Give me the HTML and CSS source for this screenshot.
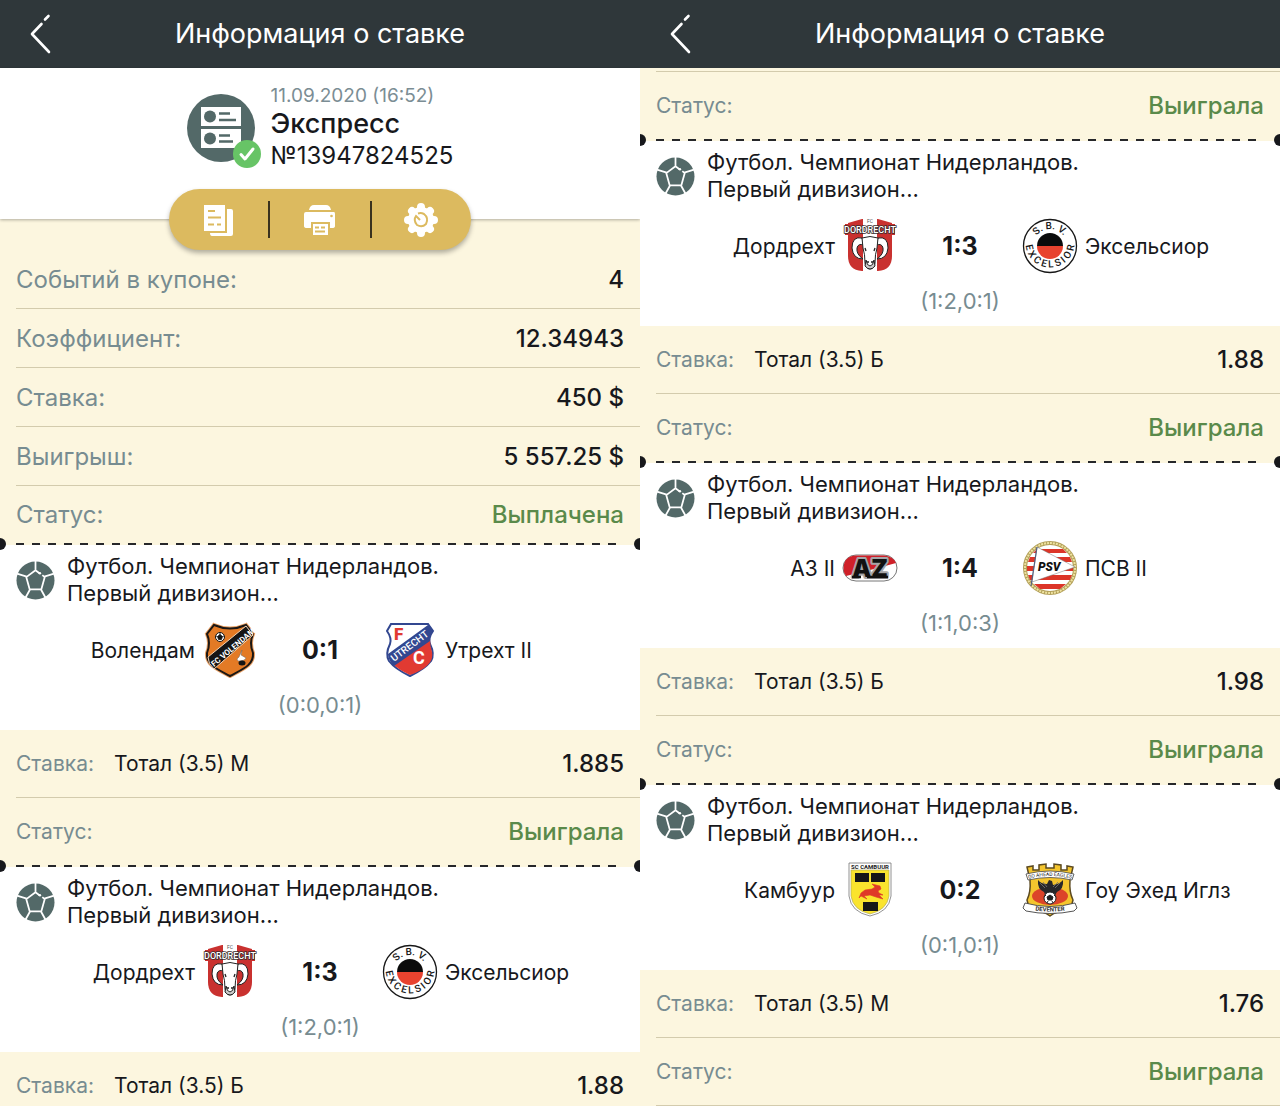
FILE: index.html
```html
<!DOCTYPE html>
<html lang="ru">
<head>
  <meta charset="UTF-8">
  <meta name="viewport" content="width=device-width, initial-scale=1.0">
  <title>Информация о ставке</title>
  <link rel="stylesheet" href="styles.css">
</head>
<body>

<!-- Shared icons and text arcs for the round logos -->
<svg class="sprite" aria-hidden="true">
  <symbol id="back" viewBox="0 0 24 42">
    <path d="M13.500 11 4 21 21 39M17 6.500 20.500 3" fill="none" stroke="#fff" stroke-width="2.600" stroke-linecap="round" stroke-linejoin="round"/>
  </symbol>

  <symbol id="ball" viewBox="0 0 40 40">
    <circle cx="20" cy="20" r="19.500" fill="#536968"/>
    <path d="M20 0V10M11 16 1 13M29 16 39 13M14.500 29 9 39M25.500 29 31 39M24 12.500 20 9.500 10.500 16.500 14 29H26L29.500 16.500 27 14.500" fill="none" stroke="#fff" stroke-width="1.800" stroke-linejoin="round"/>
    <circle cx="24.500" cy="12.500" r="1.300" fill="#fff"/>
  </symbol>

  <defs>
    <path id="arc-top" d="M11 28A17 17 0 0 1 45 28"/>
    <path id="arc-bottom" d="M3.500 25A24.500 24.500 0 0 0 52.500 25"/>
    <path id="ribbon-top" d="M7 16.500Q28 11.500 49 16.500"/>
    <path id="ribbon-bottom" d="M8 47.500Q28 51.500 48 47.500"/>
  </defs>
</svg>

<main class="screens">

  <section class="screen">
    <header class="topbar">
      <button class="back" aria-label="Назад"><svg><use href="#back"/></svg></button>
      <h1>Информация о ставке</h1>
    </header>

    <div class="ticket">
      <div class="ticket-info">
        <svg class="ticket-icon" viewBox="0 -4 76 80" aria-hidden="true">
          <circle cx="34" cy="36" r="34" fill="#536968"/>
          <path d="M14 15H54V34H14ZM14 37H54V56H14Z" fill="#fff"/>
          <circle cx="23" cy="24.500" r="6" fill="#536968"/>
          <circle cx="23" cy="46.500" r="6" fill="#536968"/>
          <path d="M32 21.500H43M32 28H49M32 43.500H43M32 49.500H46" stroke="#536968" stroke-width="2.600"/>
          <circle cx="60" cy="62" r="14" fill="#67c466"/>
          <path d="M54 62.500 58 67 66 57" fill="none" stroke="#fff" stroke-width="3" stroke-linecap="round" stroke-linejoin="round"/>
        </svg>
        <div class="ticket-text">
          <p class="date">11.09.2020 (16:52)</p>
          <p class="type">Экспресс</p>
          <p class="number">№13947824525</p>
        </div>
      </div>
      <div class="actions">
        <button aria-label="Копировать">
          <svg viewBox="0 0 34 36">
            <path d="M2 3H23V29H2Z" fill="#fff"/>
            <path d="M25 7H29Q31 7 31 9V32Q31 34 29 34H10Q8 34 8 31H25Z" fill="#fff"/>
            <path d="M6 9H13M6 15.500H19M6 22.500H12M15 22.500H19" stroke="#dcba5f" stroke-width="2"/>
          </svg>
        </button>
        <span class="split"></span>
        <button aria-label="Печать">
          <svg viewBox="0 0 34 36">
            <path d="M6 8Q7 3 11 3H23Q27 3 28 8ZM3 10H31Q32 10 32 12V24Q32 26 29 26H27V20H8V26H4Q1 26 1 24V12Q1 10 3 10Z" fill="#fff"/>
            <path d="M10 22H25V33H10Z" fill="#fff"/>
            <path d="M12 25.500H16M18 25.500H22M12 29.500H22" stroke="#dcba5f" stroke-width="2"/>
            <circle cx="28.500" cy="14" r="1.300" fill="#dcba5f"/>
          </svg>
        </button>
        <span class="split"></span>
        <button aria-label="Настройки">
          <svg viewBox="0 0 34 36">
            <circle cx="17" cy="18" r="13" fill="#fff"/>
            <path d="M17 5V31M4 18H30M8 9 26 27M26 9 8 27" stroke="#fff" stroke-width="8" stroke-linecap="round"/>
            <path d="M14 11.500Q17 10.500 20 12 25 16 22 22 18 26 13 23 9 18 12 14L16 18" fill="none" stroke="#dcba5f" stroke-width="2"/>
          </svg>
        </button>
      </div>
    </div>

    <dl class="summary">
      <div><dt>Событий в купоне:</dt><dd>4</dd></div>
      <div><dt>Коэффициент:</dt><dd>12.34943</dd></div>
      <div><dt>Ставка:</dt><dd>450 $</dd></div>
      <div><dt>Выигрыш:</dt><dd>5 557.25 $</dd></div>
      <div><dt>Статус:</dt><dd class="win">Выплачена</dd></div>
    </dl>

    <article class="event">
      <div class="tear"></div>
      <div class="match">
        <div class="league">
          <svg class="ball"><use href="#ball"/></svg>
          <h2>Футбол. Чемпионат Нидерландов.<br>Первый дивизион...</h2>
        </div>
        <div class="teams">
          <div class="team home">
            <span>Волендам</span>
            <svg viewBox="0 0 56 56">
              <path d="M12 3Q28 10 44 3L51 12Q47 21 51 31C52 43 41 47 28 54 15 47 4 43 5 31Q9 21 5 12Z" fill="#e37a25" stroke="#e9a064" stroke-width="4"/>
              <path d="M12 3Q28 10 44 3L51 12Q47 21 51 31C52 43 41 47 28 54 15 47 4 43 5 31Q9 21 5 12Z" fill="#e37a25" stroke="#1b1714" stroke-width="2"/>
              <path d="M6 35 44 4 51 13 12 47Q6 42 6 35Z" fill="#151515" stroke="#f2d3b5" stroke-width="1"/>
              <text class="crest-text" transform="translate(12 45) rotate(-40)" font-size="8" font-weight="700" fill="#fff">FC VOLENDAM</text>
              <circle cx="18" cy="15" r="4.500" fill="#fff" stroke="#111"/>
              <path d="M18 12.500 20.500 14.500 19.500 17.500H16.500L15.500 14.500ZM18 10.500V13M22 14 20.500 14.500M14 14 15.500 14.500" fill="#111" stroke="#111" stroke-width=".800"/>
              <path d="M40 28 39 33 44 36Q43 39 36 39L35 37 37 35Z" fill="#fff" stroke="#666" stroke-width=".500"/>
              <ellipse cx="40" cy="41" rx="3.500" ry="2.500" fill="#151515"/>
            </svg>
          </div>
          <strong>0:1</strong>
          <div class="team">
            <svg viewBox="0 0 56 56">
              <path d="M9 2H46L51 9Q46 16 48 22 53 32 49 39 43 47 28 54 13 47 7 39 3 32 8 22 10 16 5 9Z" fill="#fff" stroke="#324790" stroke-width="2"/>
              <path d="M11 42 48 17Q48 24 50 30 53 44 28 53 17 48 11 42Z" fill="#e13a32"/>
              <path d="M6 32 46 3 51 9Q47 15 48 19L12 44Q6 38 6 32Z" fill="#324790"/>
              <text class="crest-text" transform="translate(12 40) rotate(-37)" font-size="10" font-weight="500" fill="#fff">UTRECHT</text>
              <text class="crest-text" x="12" y="18" font-size="17" font-weight="900" fill="#e13a32">F</text>
              <text class="crest-text" x="31" y="42" font-size="18" font-weight="700" fill="#fff">C</text>
            </svg>
            <span>Утрехт II</span>
          </div>
        </div>
        <p class="halves">(0:0,0:1)</p>
      </div>
      <dl class="bet">
        <div><dt>Ставка:</dt><dd class="pick">Тотал (3.5) М</dd><dd>1.885</dd></div>
        <div><dt>Статус:</dt><dd class="win">Выиграла</dd></div>
      </dl>
    </article>

    <article class="event">
      <div class="tear"></div>
      <div class="match">
        <div class="league">
          <svg class="ball"><use href="#ball"/></svg>
          <h2>Футбол. Чемпионат Нидерландов.<br>Первый дивизион...</h2>
        </div>
        <div class="teams">
          <div class="team home">
            <span>Дордрехт</span>
            <svg viewBox="0 0 56 56">
              <path d="M6 5 20 1H36L50 5V38Q50 52 36 53H20Q6 52 6 38Z" fill="#c9312f"/>
              <path d="M21 0H35V53H21Z" fill="#fff"/>
              <path d="M3 6H53V17H3Z" fill="#c9312f"/>
              <path d="M21 6H35V17H21Z" fill="#fff"/>
              <text class="crest-text" x="25" y="5" font-size="5" fill="#555">FC</text>
              <text class="crest-text" x="28" y="15" text-anchor="middle" font-size="9" font-weight="500" fill="#fff" stroke="#3a2c2c" stroke-width="1.600" paint-order="stroke">DORDRECHT</text>
              <path d="M20 20Q10 18 10 30 11 41 21 41 14 36 15 30 16 25 22 27ZM36 20Q46 18 46 30 45 41 35 41 42 36 41 30 40 25 34 27Z" fill="#fff" stroke="#222"/>
              <path d="M20 20Q28 17 36 20L35 30Q33 36 33 45 32 51 28 51 24 51 23 45 23 36 21 30Z" fill="#fff" stroke="#222"/>
              <path d="M24 42Q25 48 28 48 31 48 32 42L33 48Q28 54 23 48Z" fill="#ccc" stroke="#222"/>
              <path d="M23 30 24 33M33 30 32 33M25 44H27M29 44H31" stroke="#222" stroke-width="1.300"/>
            </svg>
          </div>
          <strong>1:3</strong>
          <div class="team">
            <svg viewBox="0 0 56 56">
              <circle cx="28" cy="28" r="26.500" fill="#fff" stroke="#171717" stroke-width="1.300"/>
              <path d="M15 28a13 13 0 0 1 26 0Z" fill="#0b0b0b"/>
              <path d="M15 28a13 13 0 0 0 26 0Z" fill="#e8432f"/>
              <text class="crest-text" font-size="10" font-weight="500" fill="#171717" text-anchor="middle"><textPath href="#arc-top" startOffset="50%">S. B. V.</textPath></text>
              <text class="crest-text" font-size="10" font-weight="500" fill="#171717" text-anchor="middle"><textPath href="#arc-bottom" startOffset="50%">E X C E L S I O R</textPath></text>
            </svg>
            <span>Эксельсиор</span>
          </div>
        </div>
        <p class="halves">(1:2,0:1)</p>
      </div>
      <dl class="bet">
        <div><dt>Ставка:</dt><dd class="pick">Тотал (3.5) Б</dd><dd>1.88</dd></div>
      </dl>
    </article>
  </section>

  <section class="screen">
    <header class="topbar">
      <button class="back" aria-label="Назад"><svg><use href="#back"/></svg></button>
      <h1>Информация о ставке</h1>
    </header>

    <dl class="bet scrolled">
      <div><dt>Статус:</dt><dd class="win">Выиграла</dd></div>
    </dl>

    <article class="event">
      <div class="tear"></div>
      <div class="match">
        <div class="league">
          <svg class="ball"><use href="#ball"/></svg>
          <h2>Футбол. Чемпионат Нидерландов.<br>Первый дивизион...</h2>
        </div>
        <div class="teams">
          <div class="team home">
            <span>Дордрехт</span>
            <svg viewBox="0 0 56 56">
              <path d="M6 5 20 1H36L50 5V38Q50 52 36 53H20Q6 52 6 38Z" fill="#c9312f"/>
              <path d="M21 0H35V53H21Z" fill="#fff"/>
              <path d="M3 6H53V17H3Z" fill="#c9312f"/>
              <path d="M21 6H35V17H21Z" fill="#fff"/>
              <text class="crest-text" x="25" y="5" font-size="5" fill="#555">FC</text>
              <text class="crest-text" x="28" y="15" text-anchor="middle" font-size="9" font-weight="500" fill="#fff" stroke="#3a2c2c" stroke-width="1.600" paint-order="stroke">DORDRECHT</text>
              <path d="M20 20Q10 18 10 30 11 41 21 41 14 36 15 30 16 25 22 27ZM36 20Q46 18 46 30 45 41 35 41 42 36 41 30 40 25 34 27Z" fill="#fff" stroke="#222"/>
              <path d="M20 20Q28 17 36 20L35 30Q33 36 33 45 32 51 28 51 24 51 23 45 23 36 21 30Z" fill="#fff" stroke="#222"/>
              <path d="M24 42Q25 48 28 48 31 48 32 42L33 48Q28 54 23 48Z" fill="#ccc" stroke="#222"/>
              <path d="M23 30 24 33M33 30 32 33M25 44H27M29 44H31" stroke="#222" stroke-width="1.300"/>
            </svg>
          </div>
          <strong>1:3</strong>
          <div class="team">
            <svg viewBox="0 0 56 56">
              <circle cx="28" cy="28" r="26.500" fill="#fff" stroke="#171717" stroke-width="1.300"/>
              <path d="M15 28a13 13 0 0 1 26 0Z" fill="#0b0b0b"/>
              <path d="M15 28a13 13 0 0 0 26 0Z" fill="#e8432f"/>
              <text class="crest-text" font-size="10" font-weight="500" fill="#171717" text-anchor="middle"><textPath href="#arc-top" startOffset="50%">S. B. V.</textPath></text>
              <text class="crest-text" font-size="10" font-weight="500" fill="#171717" text-anchor="middle"><textPath href="#arc-bottom" startOffset="50%">E X C E L S I O R</textPath></text>
            </svg>
            <span>Эксельсиор</span>
          </div>
        </div>
        <p class="halves">(1:2,0:1)</p>
      </div>
      <dl class="bet">
        <div><dt>Ставка:</dt><dd class="pick">Тотал (3.5) Б</dd><dd>1.88</dd></div>
        <div><dt>Статус:</dt><dd class="win">Выиграла</dd></div>
      </dl>
    </article>

    <article class="event">
      <div class="tear"></div>
      <div class="match">
        <div class="league">
          <svg class="ball"><use href="#ball"/></svg>
          <h2>Футбол. Чемпионат Нидерландов.<br>Первый дивизион...</h2>
        </div>
        <div class="teams">
          <div class="team home">
            <span>АЗ II</span>
            <svg viewBox="0 0 56 56">
              <rect x="1" y="15" width="54" height="26" rx="13" fill="#fff" stroke="#777"/>
              <path d="M14 15.500H42Q51 16 54 23L36 28 4 36Q1 32 1.500 28 2 16 14 15.500Z" fill="#cf2029"/>
              <text class="crest-az" x="28" y="37" text-anchor="middle" font-size="24" font-weight="900" fill="#111" stroke="#a5a5a8" stroke-width="4" stroke-linejoin="round" paint-order="stroke">AZ</text>
              <path d="M10 37H19M25 37H46" stroke="#111" stroke-width="2.500"/>
            </svg>
          </div>
          <strong>1:4</strong>
          <div class="team">
            <svg viewBox="0 0 56 56">
              <circle cx="28" cy="28" r="25" fill="#fff" stroke="#b3a05a" stroke-width="4"/>
              <circle cx="28" cy="28" r="25" fill="none" stroke="#eee2a0" stroke-width="2" stroke-dasharray="2 1"/>
              <path d="M15 9H41L45 13H11ZM8 17H48L50 22H6ZM5 26H51V31H5ZM6 35H50L48 40H8ZM12 44H44L38 49H18Z" fill="#dc3528"/>
              <path d="M15 7 53 27 10 42Z" fill="#fff" stroke="#777" stroke-width=".500"/>
              <path d="M15 7 9 46" stroke="#536080" stroke-width="1.200"/>
              <text class="crest-text" x="16" y="31" font-size="12" font-weight="900" font-style="italic" fill="#111">PSV</text>
            </svg>
            <span>ПСВ II</span>
          </div>
        </div>
        <p class="halves">(1:1,0:3)</p>
      </div>
      <dl class="bet">
        <div><dt>Ставка:</dt><dd class="pick">Тотал (3.5) Б</dd><dd>1.98</dd></div>
        <div><dt>Статус:</dt><dd class="win">Выиграла</dd></div>
      </dl>
    </article>

    <article class="event">
      <div class="tear"></div>
      <div class="match">
        <div class="league">
          <svg class="ball"><use href="#ball"/></svg>
          <h2>Футбол. Чемпионат Нидерландов.<br>Первый дивизион...</h2>
        </div>
        <div class="teams">
          <div class="team home">
            <span>Камбуур</span>
            <svg viewBox="0 0 56 56">
              <path d="M7 1H49V34Q47 50 28 54 9 50 7 34Z" fill="#fff" stroke="#777" stroke-width=".800"/>
              <path d="M9 8H47V34Q45 48 28 52 11 48 9 34Z" fill="#fae42d" stroke="#a9a25d" stroke-width=".600"/>
              <text class="crest-text" x="28" y="7" text-anchor="middle" font-size="6" font-weight="700" fill="#222">SC CAMBUUR</text>
              <path d="M13 11H27V20H13ZM29 11H43V20H29ZM21 40H36V49H21Z" fill="#171717"/>
              <path d="M17 36 19 31 23 28 30 27 33 25 30 22 34 23 38 24 39 27 36 29 37 31 41 33 37 33 41 37 34 35 28 33 22 34 25 37 19 34Z" fill="#df3928" stroke="#df3928" stroke-width=".600"/>
            </svg>
          </div>
          <strong>0:2</strong>
          <div class="team">
            <svg viewBox="0 0 56 56">
              <path d="M5 5 11 4V8H17V3L24 2V6H32V2L39 3V8H45V4L51 5 48 18Q47 30 51 38L48 49Q36 48 28 54 20 48 8 49L5 38Q9 30 8 18Z" fill="#f4c52e" stroke="#5b4920" stroke-width="1.500"/>
              <ellipse cx="28" cy="34" rx="18" ry="9" fill="#dc4429"/>
              <path d="M16 18Q19 22 25 22L27 18 30 19 31 23Q38 22 41 18 42 27 35 30L32 35H24L22 30Q15 27 16 18Z" fill="#28282a"/>
              <path d="M18 21 23 26M38 21 33 26M21 20 25 25M36 20 31 25" stroke="#777" stroke-width=".800"/>
              <circle cx="28" cy="36" r="6" fill="#fff" stroke="#222"/>
              <path d="M28 33 31 35 30 38H26L25 35ZM22 35 24 33M34 35 32 33M25 41 26 39M31 41 30 39" fill="#222" stroke="#222"/>
              <path d="M4 12Q28 6 52 12L50 18Q28 13 6 18Z" fill="#fff" stroke="#444" stroke-width=".800"/>
              <path d="M3 41Q28 48 53 41L55 46 52 49Q28 54 4 49L1 46Z" fill="#fff" stroke="#444" stroke-width=".900"/>
              <text class="crest-text" font-size="5" fill="#222" text-anchor="middle"><textPath href="#ribbon-top" startOffset="50%">GO AHEAD EAGLES</textPath></text>
              <text class="crest-text" font-size="6" font-weight="700" fill="#333" text-anchor="middle"><textPath href="#ribbon-bottom" startOffset="50%">DEVENTER</textPath></text>
            </svg>
            <span>Гоу Эхед Иглз</span>
          </div>
        </div>
        <p class="halves">(0:1,0:1)</p>
      </div>
      <dl class="bet last">
        <div><dt>Ставка:</dt><dd class="pick">Тотал (3.5) М</dd><dd>1.76</dd></div>
        <div><dt>Статус:</dt><dd class="win">Выиграла</dd></div>
      </dl>
    </article>
  </section>

</main>
</body>
</html>
```
FILE: styles.css
```css
* {
  box-sizing: border-box;
}

body {
  margin: 0;
  font-family: Inter, "Noto Sans", sans-serif;
  font-size: 21px;
  color: #17181c;
  background: #fcf6df;
}

h1, h2, p, dl, dd {
  margin: 0;
  font-weight: 400;
}

button {
  padding: 0;
  border: none;
  background: none;
  cursor: pointer;
}

svg {
  display: block;
}

.sprite {
  position: absolute;
  width: 0;
  height: 0;
}

.screens {
  display: grid;
  grid-template-columns: 1fr 1fr;
  height: 100vh;
}

.screen {
  overflow: hidden;
  background: #fcf6df;
}

/* Top bar */
.topbar {
  display: grid;
  grid-template-columns: 60px 1fr 60px;
  align-items: center;
  height: 68px;
  background: #2f373a;
}

.topbar h1 {
  font-size: 27px;
  line-height: 32px;
  text-align: center;
  color: #fff;
}

.back {
  padding-left: 28px;
}

.back svg {
  width: 24px;
  height: 42px;
}

/* Ticket */
.ticket {
  position: relative;
  padding-top: 14px;
  height: 151px;
  background: #fff;
  box-shadow: 0 1px 3px rgba(0, 0, 0, 0.3);
}

.ticket-info {
  display: flex;
  justify-content: center;
  align-items: center;
  gap: 8px;
}

.ticket-icon {
  width: 76px;
  height: 80px;
}

.date {
  font-size: 19px;
  line-height: 28px;
  color: #7b8d94;
}

.type {
  font-size: 27px;
  font-weight: 500;
  line-height: 28px;
}

.number {
  font-size: 24px;
  line-height: 36px;
}

.actions {
  display: flex;
  align-items: center;
  width: 302px;
  height: 61px;
  margin: 15px auto 0;
  border-radius: 31px;
  background: #dcba5f;
  box-shadow: 0 3px 5px rgba(0, 0, 0, 0.3);
}

.actions button {
  flex: 1;
  display: flex;
  justify-content: center;
}

.actions svg {
  width: 34px;
  height: 36px;
}

.split {
  width: 2px;
  height: 37px;
  background: #3a321e;
}

/* Summary and bet rows */
.summary {
  padding-top: 31px;
}

.summary div,
.bet div {
  display: flex;
  align-items: center;
  margin-left: 16px;
  padding-right: 16px;
  border-bottom: 1px solid #d3cbad;
}

.summary div {
  height: 59px;
  font-size: 24px;
}

.bet div {
  height: 68px;
}

.summary div:last-child {
  height: 57px;
  border-bottom: none;
}

.bet div:nth-child(2),
.scrolled div {
  height: 67px;
  border-bottom: none;
}

.last div:nth-child(2) {
  height: 68px;
  border-bottom: 1px solid #d3cbad;
}

.scrolled::before {
  content: "";
  display: block;
  height: 4px;
  margin-left: 16px;
  border-bottom: 1px solid #d3cbad;
}

.scrolled div {
  height: 67px;
}

dt {
  color: #778c91;
}

dd {
  margin-left: auto;
  font-size: 24px;
  font-weight: 500;
}

.pick {
  margin-left: 20px;
  font-size: 21px;
  font-weight: 400;
}

.win {
  color: #5a8a4a;
}

.scrolled {
  margin-top: -1px;
}

/* Event */
.tear {
  position: relative;
  height: 2px;
  padding: 0 16px;
  background: linear-gradient(90deg, #26272a 8px, transparent 8px) 16px 0 / 16px 2px round content-box;
}

.tear::before,
.tear::after {
  content: "";
  position: absolute;
  top: -5px;
  width: 12px;
  height: 12px;
  border-radius: 50%;
  background: #17181c;
}

.tear::before {
  left: -6px;
}

.tear::after {
  right: -6px;
}

.match {
  padding: 8px 16px 11px;
  background: #fff;
}

.league {
  display: flex;
  align-items: center;
  gap: 12px;
}

.league h2 {
  font-size: 22px;
  line-height: 27px;
}

.ball {
  width: 39px;
  height: 39px;
}

.teams {
  display: grid;
  grid-template-columns: 1fr 124px 1fr;
  align-items: center;
  margin-top: 15px;
}

.teams strong {
  font-size: 25px;
  font-weight: 700;
  text-align: center;
}

.team {
  display: flex;
  align-items: center;
  gap: 7px;
}

.home {
  justify-content: flex-end;
}

.team svg {
  width: 56px;
  height: 56px;
}

.crest-text {
  font-family: Roboto, sans-serif;
}

.crest-az {
  font-family: Inter, sans-serif;
}

.halves {
  margin-top: 13px;
  font-size: 22px;
  line-height: 28px;
  text-align: center;
  color: #778c91;
}
```
